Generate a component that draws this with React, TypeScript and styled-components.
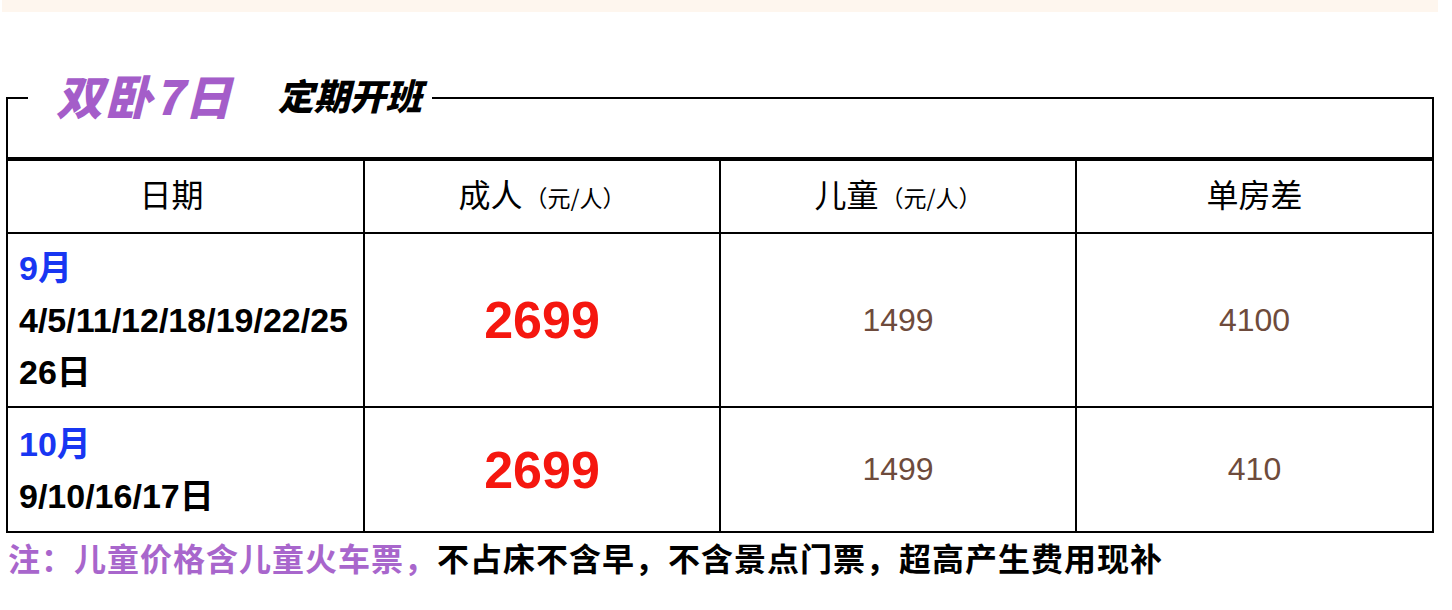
import * as React from 'react';
import styled, { createGlobalStyle } from 'styled-components';

const GlobalStyle = createGlobalStyle`
	html, body {
		margin: 0;
		padding: 0;
		background: #ffffff;
	}
	body {
		font-family: "Liberation Sans", "Noto Sans CJK SC", sans-serif;
	}
`;

const Page = styled.div`
	width: 1436px;
	padding: 0 2px;
`;

const TopBand = styled.div`
	height: 12px;
	background: #fef6ee;
`;

const Section = styled.fieldset`
	margin: 58px 4px 0;
	padding: 0;
	border: 2px solid #000;
	min-width: 0;
`;

const Legend = styled.legend`
	box-sizing: border-box;
	margin-left: 20px;
	padding: 0 10px 8px 28px;
	display: flex;
	align-items: center;
	gap: 44px;
	height: 56px;
	font-family: "Noto Sans CJK SC", sans-serif;
	font-weight: 900;
	font-style: italic;
`;

const Title = styled.span`
	font-size: 47px;
	color: #a45dc9;
	letter-spacing: 2px;
`;

const Subtitle = styled.span`
	font-size: 36px;
	color: #000;
	font-weight: 900;
`;

const Spacer = styled.div`
	height: 31px;
`;

const Table = styled.table`
	width: 100%;
	border-collapse: collapse;
	table-layout: fixed;
	border-top: 4px solid #000;
`;

const HeadCell = styled.th<{ $shift?: number }>`
	height: 63px;
	padding: 0 ${p => p.$shift || 0}px 8px 0;
	border-left: 2px solid #000;
	font-family: "Noto Sans CJK SC", sans-serif;
	font-weight: 400;
	font-size: 32px;
	color: #000;
	text-align: center;
	vertical-align: middle;
	&:first-child {
		border-left: none;
	}
`;

const Unit = styled.span`
	font-size: 23px;
	margin-left: 2px;
`;

const Row = styled.tr<{ $h: number }>`
	height: ${p => p.$h}px;
	border-top: 2px solid #000;
`;

const DateCell = styled.td`
	padding: 0 0 0 11px;
	font-family: "Liberation Sans", "Noto Sans CJK SC", sans-serif;
	font-weight: 700;
	font-size: 34px;
	line-height: 52px;
	color: #000;
	vertical-align: middle;
	white-space: nowrap;
`;

const Month = styled.div`
	color: #1836f2;
`;

const ValueCell = styled.td`
	padding: 0;
	border-left: 2px solid #000;
	text-align: center;
	vertical-align: middle;
`;

const Price = styled.span`
	font-family: "Liberation Sans", sans-serif;
	font-weight: 700;
	font-size: 52px;
	color: #f5170f;
`;

const Plain = styled.span`
	font-family: "Liberation Sans", sans-serif;
	font-size: 32px;
	color: #6e4b3c;
`;

const Note = styled.p`
	margin: 4px 0 0 6px;
	font-family: "Noto Sans CJK SC", sans-serif;
	font-weight: 700;
	font-size: 32px;
	letter-spacing: 1px;
	line-height: 40px;
	color: #000;
`;

const NoteLead = styled.span`
	color: #a866cc;
`;

const rows = [
	{ month: '9月', days: ['4/5/11/12/18/19/22/25', '26日'], adult: '2699', child: '1499', single: '4100', h: 174 },
	{ month: '10月', days: ['9/10/16/17日'], adult: '2699', child: '1499', single: '410', h: 124 },
];

export default function App() {
	return (
		<Page>
			<GlobalStyle />
			<TopBand />
			<Section>
				<Legend>
					<Title>双卧7日</Title>
					<Subtitle>定期开班</Subtitle>
				</Legend>
				<Spacer />
				<Table>
					<thead>
						<tr>
							<HeadCell $shift={28}>日期</HeadCell>
							<HeadCell>成人<Unit>（元/人）</Unit></HeadCell>
							<HeadCell>儿童<Unit>（元/人）</Unit></HeadCell>
							<HeadCell>单房差</HeadCell>
						</tr>
					</thead>
					<tbody>
						{rows.map(r => (
							<Row key={r.month} $h={r.h}>
								<DateCell>
									<Month>{r.month}</Month>
									{r.days.map(d => <div key={d}>{d}</div>)}
								</DateCell>
								<ValueCell><Price>{r.adult}</Price></ValueCell>
								<ValueCell><Plain>{r.child}</Plain></ValueCell>
								<ValueCell><Plain>{r.single}</Plain></ValueCell>
							</Row>
						))}
					</tbody>
				</Table>
			</Section>
			<Note>
				<NoteLead>注：儿童价格含儿童火车票，</NoteLead>不占床不含早，不含景点门票，超高产生费用现补
			</Note>
		</Page>
	);
}
